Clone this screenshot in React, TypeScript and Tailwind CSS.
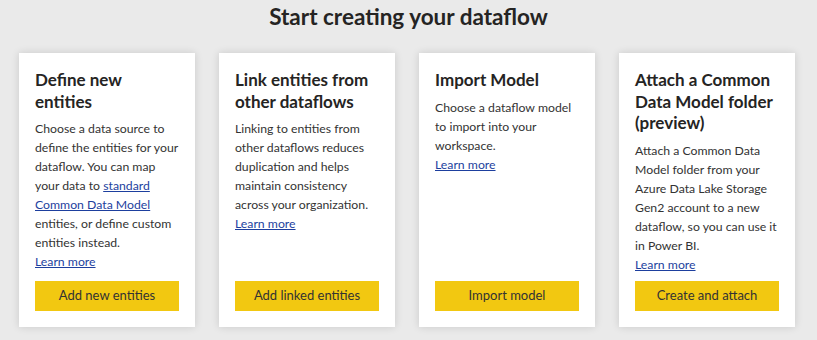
const link = 'text-[#1d3f9e] underline'

const cards = [
  {
    title: ['Define new', 'entities'],
    body: [
      'Choose a data source to',
      'define the entities for your',
      'dataflow. You can map',
      <>
        your data to <a className={link} href="#">standard</a>
      </>,
      <a className={link} href="#">Common Data Model</a>,
      'entities, or define custom',
      'entities instead.',
    ],
    button: 'Add new entities',
  },
  {
    title: ['Link entities from', 'other dataflows'],
    body: [
      'Linking to entities from',
      'other dataflows reduces',
      'duplication and helps',
      'maintain consistency',
      'across your organization.',
    ],
    button: 'Add linked entities',
  },
  {
    title: ['Import Model'],
    body: ['Choose a dataflow model', 'to import into your', 'workspace.'],
    button: 'Import model',
  },
  {
    title: ['Attach a Common', 'Data Model folder', '(preview)'],
    body: [
      'Attach a Common Data',
      'Model folder from your',
      'Azure Data Lake Storage',
      'Gen2 account to a new',
      'dataflow, so you can use it',
      'in Power BI.',
    ],
    button: 'Create and attach',
  },
]

const Card = ({
  title,
  body,
  button,
}: {
  title: string[]
  body: React.ReactNode[]
  button: string
}) => (
  <div className="w-[176px] h-[274px] bg-white shadow-[0_0_8px_rgba(0,0,0,0.14)] p-4 flex flex-col">
    <h3 className="text-[17px] leading-[21.5px] font-bold text-[#252423]">
      {title.map((t, i) => (
        <span key={i} className="block whitespace-nowrap">
          {t}
        </span>
      ))}
    </h3>
    <div className="mt-[7px] text-[12.25px] leading-[19px] text-[#333333]">
      {body.map((t, i) => (
        <span key={i} className="block whitespace-nowrap">
          {t}
        </span>
      ))}
      <a className={link} href="#">
        Learn more
      </a>
    </div>
    <button className="mt-auto h-[30px] shrink-0 w-full bg-[#f2c811] text-[13px] text-[#333333]">
      {button}
    </button>
  </div>
)

export default function App() {
  return (
    <div
      className="w-[817px] h-[340px] bg-[#eaeaea] flex flex-col items-center"
      style={{ fontFamily: 'Lato, "Open Sans", sans-serif' }}
    >
      <h1 className="mt-[3px] text-[22.5px] leading-[28px] font-bold text-[#252423]">
        Start creating your dataflow
      </h1>
      <div className="mt-[22px] self-start pl-[19px] flex gap-6">
        {cards.map((c) => (
          <Card key={c.button} {...c} />
        ))}
      </div>
    </div>
  )
}
